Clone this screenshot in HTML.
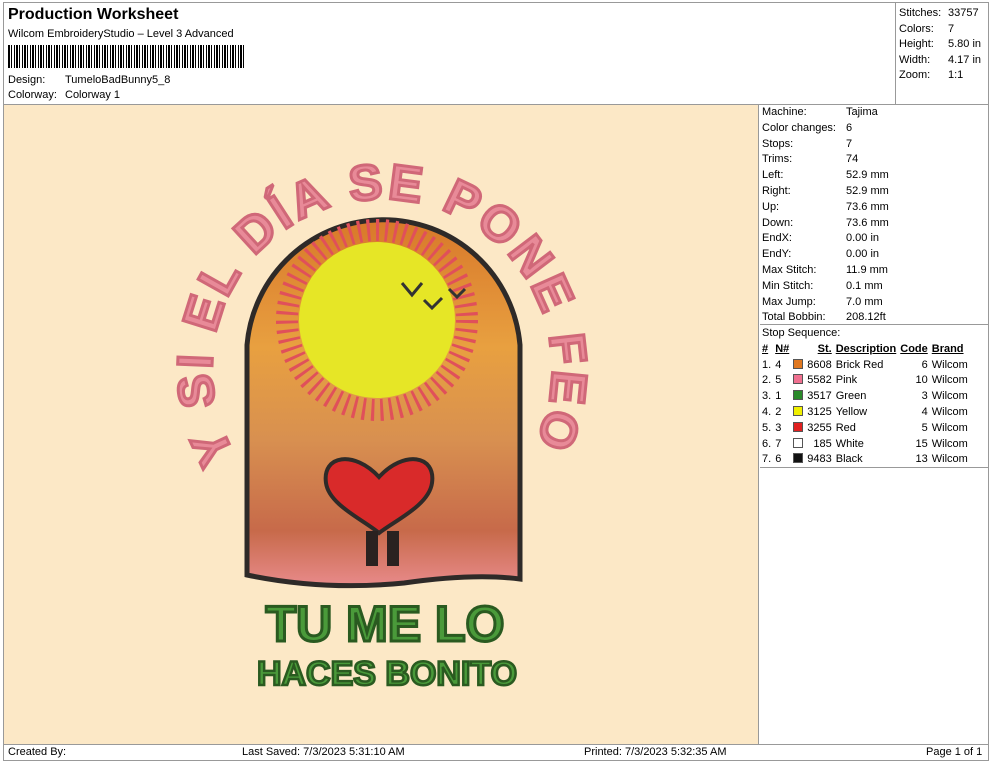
<!DOCTYPE html>
<html><head><meta charset="utf-8"><style>
*{margin:0;padding:0;box-sizing:border-box}
body{width:990px;height:762px;background:#fff;font-family:"Liberation Sans",Arial,sans-serif;font-size:11px;color:#000;position:relative;overflow:hidden}
.a{position:absolute;white-space:nowrap}
.bx{position:absolute;border:1px solid #999}
table{border-collapse:collapse;font-size:11px}
td{padding:0 2px;height:15.8px;white-space:nowrap}
.sw{display:inline-block;width:10px;height:10px;border:1px solid #555;vertical-align:-1px}
</style></head><body>
<div class="bx" style="left:3px;top:2px;width:986px;height:759px"></div>
<div class="bx" style="left:3px;top:2px;width:893px;height:103px"></div>
<div class="bx" style="left:895px;top:2px;width:94px;height:103px"></div>
<div class="a" style="left:8px;top:6px;font-size:16px;font-weight:bold">Production Worksheet</div>
<div class="a" style="left:8px;top:28px">Wilcom EmbroideryStudio – Level 3 Advanced</div>
<div class="a" style="left:8px;top:45px;width:236px;height:23px;background:repeating-linear-gradient(90deg,#000 0 2px,#fff 2px 3px,#000 3px 4px,#fff 4px 6px,#000 6px 7px,#fff 7px 8px)"></div>
<div class="a" style="left:8px;top:74px">Design:</div><div class="a" style="left:65px;top:74px">TumeloBadBunny5_8</div>
<div class="a" style="left:8px;top:89px">Colorway:</div><div class="a" style="left:65px;top:89px">Colorway 1</div>
<div class="a" style="left:899px;top:6px;line-height:15.6px">Stitches:<br>Colors:<br>Height:<br>Width:<br>Zoom:</div>
<div class="a" style="left:948px;top:6px;line-height:15.6px">33757<br>7<br>5.80 in<br>4.17 in<br>1:1</div>
<div class="a" style="left:4px;top:105px;width:755px;height:639px;background:#fce8c6;border-right:1px solid #999"></div>
<svg class="a" style="left:4px;top:105px" width="755" height="639">
<defs><linearGradient id="g" x1="0" y1="0" x2="0" y2="1">
<stop offset="0" stop-color="#d8782a"/><stop offset=".35" stop-color="#e8a040"/><stop offset=".6" stop-color="#d89050"/><stop offset=".85" stop-color="#c76a4a"/><stop offset="1" stop-color="#e88a8a"/></linearGradient>
<path id="arc" d="M239,362 A170,170 0 1 1 517,362"/></defs>
<path d="M243,470 L243,240 A137,137 0 0 1 516,240 L516,474 Q470,468 400,478 Q320,486 243,470Z" fill="url(#g)" stroke="#2e2a28" stroke-width="5"/>
<circle cx="373" cy="215" r="90" fill="none" stroke-dasharray="3 6" stroke-width="22" stroke="#e0505a"/>
<circle cx="373" cy="215" r="78" fill="#e6e626"/>
<path d="M398,178 l10,12 l10,-12 M420,195 l8,8 l10,-10 M445,184 l8,8 l8,-8" stroke="#333" stroke-width="3" fill="none"/>
<path d="M375,372 C350,345 318,350 322,378 C325,400 360,415 375,428 C392,415 425,400 428,378 C432,350 400,345 375,372Z" fill="#d92a2a" stroke="#2e2a28" stroke-width="4"/>
<rect x="362" y="426" width="12" height="35" fill="#2a2220"/><rect x="383" y="426" width="12" height="35" fill="#2a2220"/>
<text font-family="Liberation Sans" font-weight="bold" font-size="50" fill="#e88a98" stroke="#d06878" stroke-width="3"><textPath href="#arc" textLength="700" lengthAdjust="spacing" startOffset="14">Y SI EL DÍA SE PONE FEO</textPath></text>
<text x="381" y="536" font-family="Liberation Sans" font-weight="bold" font-size="50" fill="#4a9a3a" stroke="#2a5a20" stroke-width="3" text-anchor="middle">TU ME LO</text>
<text x="383" y="580" font-family="Liberation Sans" font-weight="bold" font-size="34" fill="#4a9a3a" stroke="#2a5a20" stroke-width="2.5" text-anchor="middle">HACES BONITO</text>
</svg>
<div class="a" style="left:762px;top:105px;line-height:15.8px;padding-top:0">Machine:<br>Color changes:<br>Stops:<br>Trims:<br>Left:<br>Right:<br>Up:<br>Down:<br>EndX:<br>EndY:<br>Max Stitch:<br>Min Stitch:<br>Max Jump:<br>Total Bobbin:<br>Stop Sequence:</div>
<div class="a" style="left:846px;top:105px;line-height:15.8px">Tajima<br>6<br>7<br>74<br>52.9 mm<br>52.9 mm<br>73.6 mm<br>73.6 mm<br>0.00 in<br>0.00 in<br>11.9 mm<br>0.1 mm<br>7.0 mm<br>208.12ft</div>
<div class="a" style="left:760px;top:324px;width:229px;border-top:1px solid #999"></div>
<div class="a" style="left:760px;top:467px;width:229px;border-top:1px solid #999"></div>
<table class="a" style="left:760px;top:341px">
<tr style="font-weight:bold;text-decoration:underline"><td>#</td><td>N#</td><td></td><td style="text-align:right">St.</td><td>Description</td><td style="text-align:right">Code</td><td>Brand</td></tr>
<tr><td>1.</td><td>4</td><td><span class="sw" style="background:#e07820"></span></td><td>8608</td><td>Brick Red</td><td align="right">6</td><td>Wilcom</td></tr>
<tr><td>2.</td><td>5</td><td><span class="sw" style="background:#f07090"></span></td><td>5582</td><td>Pink</td><td align="right">10</td><td>Wilcom</td></tr>
<tr><td>3.</td><td>1</td><td><span class="sw" style="background:#2a8a2a"></span></td><td>3517</td><td>Green</td><td align="right">3</td><td>Wilcom</td></tr>
<tr><td>4.</td><td>2</td><td><span class="sw" style="background:#f0f000"></span></td><td>3125</td><td>Yellow</td><td align="right">4</td><td>Wilcom</td></tr>
<tr><td>5.</td><td>3</td><td><span class="sw" style="background:#e02020"></span></td><td>3255</td><td>Red</td><td align="right">5</td><td>Wilcom</td></tr>
<tr><td>6.</td><td>7</td><td><span class="sw" style="background:#fff"></span></td><td align="right">185</td><td>White</td><td align="right">15</td><td>Wilcom</td></tr>
<tr><td>7.</td><td>6</td><td><span class="sw" style="background:#111"></span></td><td>9483</td><td>Black</td><td align="right">13</td><td>Wilcom</td></tr>
</table>
<div class="a" style="left:3px;top:744px;width:986px;border-top:1px solid #999"></div>
<div class="a" style="left:8px;top:746px">Created By:</div>
<div class="a" style="left:242px;top:746px">Last Saved: 7/3/2023 5:31:10 AM</div>
<div class="a" style="left:584px;top:746px">Printed: 7/3/2023 5:32:35 AM</div>
<div class="a" style="left:926px;top:746px">Page 1 of 1</div>
</body></html>
